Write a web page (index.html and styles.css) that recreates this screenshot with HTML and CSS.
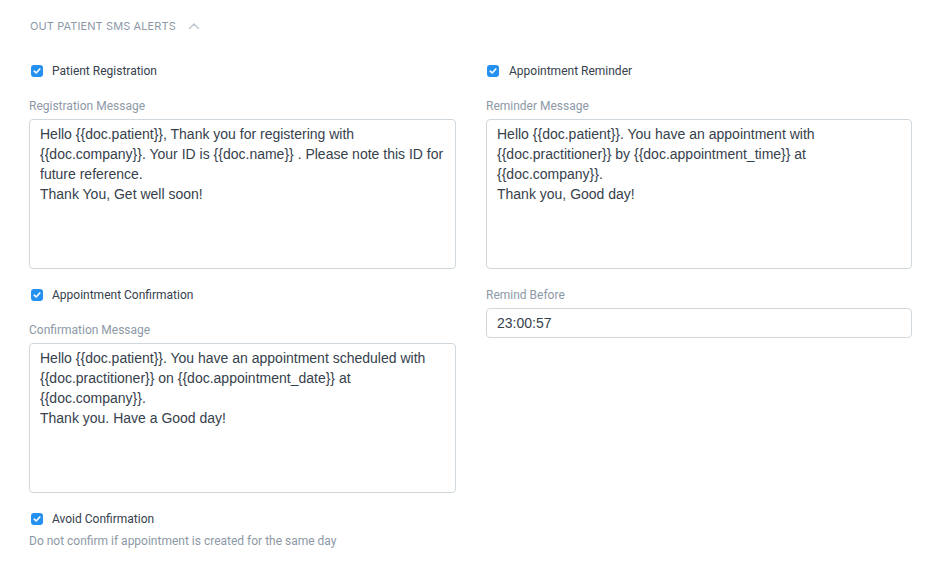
FILE: index.html
```html
<!DOCTYPE html>
<html>
<head>
<meta charset="utf-8">
<link rel="stylesheet" href="styles.css">
</head>
<body>
<div class="section">
  <div class="section-head">
    <span class="section-title">Out Patient SMS Alerts</span>
    <svg class="chevron" width="12" height="8" viewBox="0 0 12 8"><path d="M1.5 6.5 L6 2 L10.5 6.5" fill="none" stroke="#c0c9d2" stroke-width="1.5" stroke-linecap="round" stroke-linejoin="round"/></svg>
  </div>
  <div class="columns">
    <div class="col">
      <label class="check"><span class="box"><svg width="8" height="8" viewBox="0 0 8 8"><path d="M1.2 4.2 L3.2 6 L6.8 2" fill="none" stroke="#fff" stroke-width="1.6" stroke-linecap="round" stroke-linejoin="round"/></svg></span>Patient Registration</label>
      <div class="field">
        <div class="label">Registration Message</div>
        <div class="textarea">Hello {{doc.patient}}, Thank you for registering with {{doc.company}}. Your ID is {{doc.name}} . Please note this ID for future reference.<br>Thank You, Get well soon!</div>
      </div>
      <label class="check"><span class="box"><svg width="8" height="8" viewBox="0 0 8 8"><path d="M1.2 4.2 L3.2 6 L6.8 2" fill="none" stroke="#fff" stroke-width="1.6" stroke-linecap="round" stroke-linejoin="round"/></svg></span>Appointment Confirmation</label>
      <div class="field">
        <div class="label">Confirmation Message</div>
        <div class="textarea">Hello {{doc.patient}}. You have an appointment scheduled with {{doc.practitioner}} on {{doc.appointment_date}} at {{doc.company}}.<br>Thank you. Have a Good day!</div>
      </div>
      <label class="check"><span class="box"><svg width="8" height="8" viewBox="0 0 8 8"><path d="M1.2 4.2 L3.2 6 L6.8 2" fill="none" stroke="#fff" stroke-width="1.6" stroke-linecap="round" stroke-linejoin="round"/></svg></span>Avoid Confirmation</label>
      <div class="help">Do not confirm if appointment is created for the same day</div>
    </div>
    <div class="col right">
      <label class="check"><span class="box"><svg width="8" height="8" viewBox="0 0 8 8"><path d="M1.2 4.2 L3.2 6 L6.8 2" fill="none" stroke="#fff" stroke-width="1.6" stroke-linecap="round" stroke-linejoin="round"/></svg></span>Appointment Reminder</label>
      <div class="field">
        <div class="label">Reminder Message</div>
        <div class="textarea">Hello {{doc.patient}}. You have an appointment with {{doc.practitioner}} by {{doc.appointment_time}} at {{doc.company}}.<br>Thank you, Good day!</div>
      </div>
      <div class="field remind">
        <div class="label">Remind Before</div>
        <div class="input">23:00:57</div>
      </div>
    </div>
  </div>
</div>
</body>
</html>
```
FILE: styles.css
```css
* { box-sizing: border-box; }
body {
  margin: 0;
  background: #fff;
  font-family: Roboto, "Liberation Sans", sans-serif;
  color: #36414c;
}
.section {
  padding: 17px 30px 0 29px;
}
.section-head {
  display: flex;
  align-items: center;
  height: 18px;
  margin-bottom: 27px;
}
.section-title {
  text-transform: uppercase;
  font-family: Inter, Roboto, sans-serif;
  font-size: 11px;
  letter-spacing: 0.1px;
  color: #8d99a6;
  margin-left: 1px;
}
.chevron { margin-left: 12px; margin-top: -1px; }
.columns {
  display: grid;
  grid-template-columns: 427px 426px;
  column-gap: 30px;
}
.col { display: flex; flex-direction: column; }
.check {
  display: flex;
  align-items: center;
  font-size: 12px;
  height: 18px;
  color: #36414c;
  margin-bottom: 18px;
}
.box {
  width: 12px;
  height: 12px;
  border-radius: 3px;
  background: #2490ef;
  margin-left: 2px;
  margin-right: 9px;
  display: flex;
  align-items: center;
  justify-content: center;
}
.right .box { margin-left: 1px; margin-right: 10px; }
.field { margin-bottom: 17px; }
.field.remind { margin-top: 1px; }
.label {
  font-size: 12px;
  color: #8d99a6;
  height: 19px;
  padding-top: 1px;
  margin-bottom: 2px;
}
.textarea {
  height: 150px;
  border: 1px solid #d1d8dd;
  border-radius: 4px;
  padding: 4px 10px;
  font-family: "Liberation Sans", Arial, sans-serif;
  font-size: 14px;
  line-height: 20px;
  color: #36414c;
}
.input {
  height: 30px;
  border: 1px solid #d1d8dd;
  border-radius: 4px;
  padding: 0 10px;
  font-family: "Liberation Sans", Arial, sans-serif;
  font-size: 14px;
  line-height: 28px;
  color: #36414c;
}
.help {
  font-size: 12px;
  color: #8d99a6;
  margin-top: -12px;
}
```
